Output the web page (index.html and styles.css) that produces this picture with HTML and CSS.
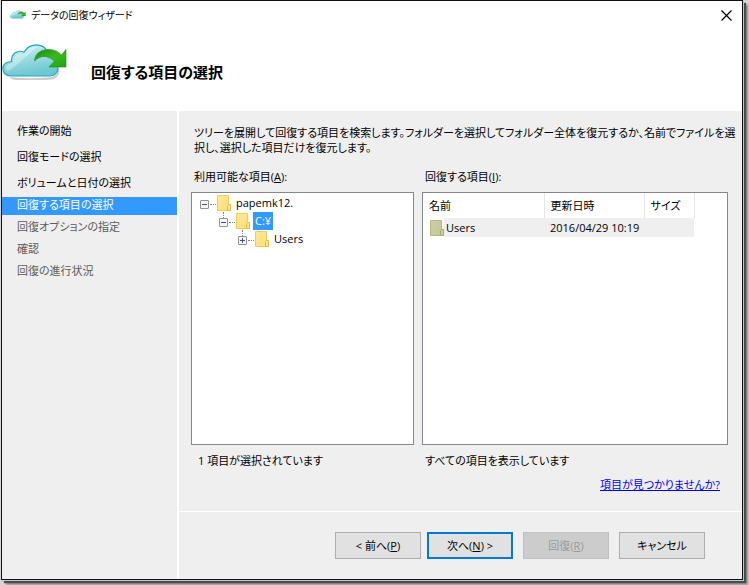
FILE: index.html
```html
<!DOCTYPE html>
<html lang="ja">
<head>
    <meta charset="UTF-8" />
    <meta name="viewport" content="width=device-width, initial-scale=1.0" />
    <title>データの回復ウィザード</title>
    <link rel="stylesheet" href="styles.css">
</head>
<body>
    <svg class="defs" width="0" height="0" aria-hidden="true">
        <defs>
            <linearGradient id="cloudFill" x1="0" y1="0" x2="0.3" y2="1">
                <stop offset="0" stop-color="#d9f3f6" />
                <stop offset="0.45" stop-color="#a3dfe5" />
                <stop offset="1" stop-color="#6cc8d1" />
            </linearGradient>
            <linearGradient id="arrowFill" x1="0" y1="0" x2="1" y2="1">
                <stop offset="0" stop-color="#118a11" />
                <stop offset="0.5" stop-color="#3cb91d" />
                <stop offset="1" stop-color="#1fa514" />
            </linearGradient>
            <linearGradient id="folderFill" x1="0" y1="0" x2="1" y2="1">
                <stop offset="0" stop-color="#ffe99b" />
                <stop offset="1" stop-color="#ffdc74" />
            </linearGradient>
            <symbol id="cloud" viewBox="0 0 66 38">
                <path d="M8 33 C20 35 42 34 50 33 Q56 30 57 24 Q59 31 52 35 Q48 36 40 36 H14 Q9 36 8 33Z" fill="#999" opacity="0.5" />
                <path d="M10 32 C4 32 0.8 29 0.8 24.500 C0.8 20 4.500 18 9.500 17.500 C9 10 15 5.500 22 8 C25 3 30 0.800 35 0.800 C41 0.800 45 5 46 10 C53 11 56 16 55 20 C58 26 54 32 47 32 Z" fill="url(#cloudFill)" stroke="#1fa9b8" stroke-width="1.200" />
                <path d="M11 19 C10 12 16 8 22 10 C26 3 32 2 36 3 C27 8 18 20 6 27 C2 24 5 19 11 19Z" fill="#fff" opacity="0.35" />
                <path d="M32.500 17 C33 8 41 5 48 5.500 C53 6 57 8 59.500 11 L64 5.500 V23 H47 L52.500 17 C46 11 38 11 32.500 17Z" fill="url(#arrowFill)" stroke="#15940f" stroke-width="0.600" />
            </symbol>
            <symbol id="folder" viewBox="0 0 14 16">
                <path d="M0.500 0.500 H11.500 V9.500 H13.500 V15.500 H0.500 Z" fill="url(#folderFill)" stroke="#f1cb55" />
                <path d="M11.500 9.500 L10.500 10.500 V15.500 H13.500 V9.500 Z" fill="#ffe695" stroke="#e8bb3c" />
            </symbol>
        </defs>
    </svg>

    <div class="window">
        <div class="titlebar">
            <svg class="title-icon"><use href="#cloud" /></svg>
            <span class="title">データの回復ウィザード</span>
            <button type="button" class="close" aria-label="閉じる">
                <svg width="11" height="11" viewBox="0 0 11 11"><path d="M0.500 0.500 L10.500 10.500 M10.500 0.500 L0.500 10.500" stroke="#000" stroke-width="1.200" /></svg>
            </button>
        </div>

        <header class="header">
            <svg class="header-icon"><use href="#cloud" /></svg>
            <h1>回復する項目の選択</h1>
        </header>

        <div class="body">
            <ol class="steps">
                <li class="done">作業の開始</li>
                <li class="done">回復モードの選択</li>
                <li class="done">ボリュームと日付の選択</li>
                <li class="current">回復する項目の選択</li>
                <li>回復オプションの指定</li>
                <li>確認</li>
                <li>回復の進行状況</li>
            </ol>

            <main class="main">
                <div class="content">
                    <p class="description">ツリーを展開して回復する項目を検索します。フォルダーを選択してフォルダー全体を復元するか、名前でファイルを選<br>択し、選択した項目だけを復元します。</p>

                    <div class="panes">
                        <section class="pane">
                            <h2 id="availableLabel">利用可能な項目(<u>A</u>):</h2>
                            <div class="box">
                                <ul class="tree" aria-labelledby="availableLabel">
                                    <li>
                                        <div class="node">
                                            <button type="button" class="expander" aria-label="折りたたむ"></button>
                                            <svg class="folder"><use href="#folder" /></svg>
                                            <span class="name">papemk12.</span>
                                        </div>
                                        <ul>
                                            <li>
                                                <div class="node">
                                                    <button type="button" class="expander" aria-label="折りたたむ"></button>
                                                    <svg class="folder"><use href="#folder" /></svg>
                                                    <span class="name selected">C:¥</span>
                                                </div>
                                                <ul>
                                                    <li>
                                                        <div class="node">
                                                            <button type="button" class="expander closed" aria-label="展開"></button>
                                                            <svg class="folder"><use href="#folder" /></svg>
                                                            <span class="name">Users</span>
                                                        </div>
                                                    </li>
                                                </ul>
                                            </li>
                                        </ul>
                                    </li>
                                </ul>
                            </div>
                            <p class="status first">1 項目が選択されています</p>
                        </section>

                        <section class="pane">
                            <h2 id="itemsLabel">回復する項目(<u>I</u>):</h2>
                            <div class="box">
                                <table class="files" aria-labelledby="itemsLabel">
                                    <thead>
                                        <tr>
                                            <th class="col-name">名前</th>
                                            <th class="col-date">更新日時</th>
                                            <th class="col-size">サイズ</th>
                                        </tr>
                                    </thead>
                                    <tbody>
                                        <tr>
                                            <td class="file">
                                                <div class="file-name">
                                                    <svg class="folder dim"><use href="#folder" /></svg>
                                                    <span>Users</span>
                                                </div>
                                            </td>
                                            <td>2016/04/29 10:19</td>
                                            <td></td>
                                        </tr>
                                    </tbody>
                                </table>
                            </div>
                            <p class="status">すべての項目を表示しています</p>
                        </section>
                    </div>

                    <p class="help"><a href="#">項目が見つかりませんか?</a></p>
                </div>

                <footer class="buttons">
                    <button type="button" class="btn back">&lt; 前へ(<u>P</u>)</button>
                    <button type="button" class="btn primary">次へ(<u>N</u>) &gt;</button>
                    <button type="button" class="btn" disabled>回復(<u>R</u>)</button>
                    <button type="button" class="btn">キャンセル</button>
                </footer>
            </main>
        </div>
    </div>
</body>
</html>
```
FILE: styles.css
```css
* {
    box-sizing: border-box;
}
body {
    margin: 0;
    padding: 0 6px 5px 1px;
    min-height: 100vh;
    display: flex;
    background-color: #d4d5d7;
    color: #000;
    font-family: "Open Sans", "Noto Sans CJK JP", sans-serif;
    font-size: 11px;
    line-height: 16px;
    font-feature-settings: "palt";
}
h1, h2, p, ul, ol {
    margin: 0;
    padding: 0;
}
ul, ol {
    list-style: none;
}
button {
    font: inherit;
    font-feature-settings: inherit;
    color: inherit;
    padding: 0;
}
.defs {
    position: absolute;
}

/* window frame */
.window {
    flex: 1;
    min-width: 0;
    display: flex;
    flex-direction: column;
    background-color: #fff;
    border: 1px solid #111;
    box-shadow: 1px 1px 0 #c4c6c8, 3px 3px 1px #4c4c4c, 5px 5px 2px #8c8e8e;
}
.titlebar {
    display: flex;
    align-items: center;
    height: 28px;
    padding: 0 10px 0 8px;
}
.title-icon {
    width: 16px;
    height: 10px;
}
.title {
    flex: 1;
    padding-left: 5px;
    font-size: 10px;
}
.close {
    display: flex;
    border: none;
    background: none;
}
.header {
    display: flex;
    height: 82px;
    padding-top: 15px;
}
.header-icon {
    width: 66px;
    height: 38px;
}
h1 {
    padding: 18px 0 0 23px;
    font-size: 15px;
    line-height: 20px;
    font-weight: bold;
}

/* steps */
.body {
    flex: 1;
    display: flex;
    background-color: #efefef;
}
.steps {
    width: 177px;
    padding-top: 7px;
    border-right: 2px solid #fff;
    color: #5c5c5c;
}
.steps li {
    height: 18px;
    line-height: 16px;
    margin-bottom: 4px;
    padding-left: 15px;
}
.steps .done {
    height: 26px;
    line-height: 26px;
    margin-bottom: 0;
    color: #000;
}
.steps .current {
    margin-top: 1px;
    background-color: #3399ff;
    color: #fff;
}

/* content */
.main {
    flex: 1;
    min-width: 0;
    display: flex;
    flex-direction: column;
}
.content {
    flex: 1;
    display: flex;
    flex-direction: column;
    padding: 14px 14px 18px 12px;
}
.description {
    padding-left: 3px;
    line-height: 15px;
    white-space: nowrap;
}
.panes {
    flex: 1;
    display: grid;
    grid-template-columns: 223fr 306fr;
    gap: 8px;
    padding-top: 14px;
}
.pane {
    min-width: 0;
    display: flex;
    flex-direction: column;
}
h2 {
    padding-left: 3px;
    margin-bottom: 7px;
    font-size: 11px;
    line-height: 16px;
    font-weight: normal;
}
.box {
    flex: 1;
    background-color: #fff;
    border: 1px solid #828790;
}
.status {
    padding: 8px 3px 0;
}
.status.first {
    padding-left: 7px;
}
.help {
    padding-top: 8px;
    padding-right: 8px;
    text-align: right;
}
.help a {
    color: #0000ff;
}

/* tree */
.tree {
    padding: 1px 0 0 8px;
}
.tree ul {
    padding-left: 19px;
}
.node {
    display: flex;
    align-items: center;
    height: 18px;
}
.expander {
    position: relative;
    width: 9px;
    height: 9px;
    margin-top: 2px;
    border: 1px solid #919191;
    border-radius: 1px;
    background: linear-gradient(#404f9c, #404f9c) center / 5px 1px no-repeat #f6f6f6;
}
.expander.closed {
    background: linear-gradient(#404f9c, #404f9c) center / 5px 1px no-repeat, linear-gradient(#404f9c, #404f9c) center / 1px 5px no-repeat #f6f6f6;
}
/* dotted connectors */
.expander::after {
    content: "";
    position: absolute;
    top: 3px;
    left: 9px;
    width: 6px;
    border-top: 1px dotted #808080;
}
.tree ul .expander::before {
    content: "";
    position: absolute;
    left: 3px;
    bottom: 8px;
    height: 6px;
    border-left: 1px dotted #808080;
}
.folder {
    width: 14px;
    height: 16px;
    margin-left: 8px;
}
.name {
    margin-left: 3px;
    padding: 0 2px;
    line-height: 18px;
}
.name.selected {
    background-color: #3399ff;
    color: #fff;
}

/* file list */
.files {
    table-layout: fixed;
    width: 271px;
    border-collapse: collapse;
}
.files th {
    height: 25px;
    padding: 0 6px;
    border-right: 1px solid #e5e5e5;
    font-weight: normal;
    text-align: left;
}
.files td {
    height: 19px;
    padding: 0 0 0 6px;
    background-color: #efefef;
    white-space: nowrap;
}
.col-name {
    width: 121px;
}
.col-date {
    width: 100px;
}
.col-size {
    width: 50px;
}
.files .file {
    padding: 0;
    background: linear-gradient(to right, #fff 21px, #efefef 21px);
}
.file-name {
    display: flex;
    align-items: center;
}
.folder.dim {
    margin-left: 7px;
    margin-right: 2px;
    filter: saturate(0.5) hue-rotate(15deg) brightness(0.88);
}

/* buttons */
.buttons {
    display: flex;
    justify-content: flex-end;
    gap: 10px;
    padding: 20px 37px 20px 0;
    border-top: 1px solid #fff;
}
.btn {
    width: 86px;
    height: 27px;
    border: 1px solid #adadad;
    background-color: #e1e1e1;
}
.btn.back {
    margin-right: -4px;
}
.btn.primary {
    border: 2px solid #0078d7;
}
.btn:disabled {
    border-color: #bfbfbf;
    background-color: #cccccc;
    color: #9a9a9a;
}
```
